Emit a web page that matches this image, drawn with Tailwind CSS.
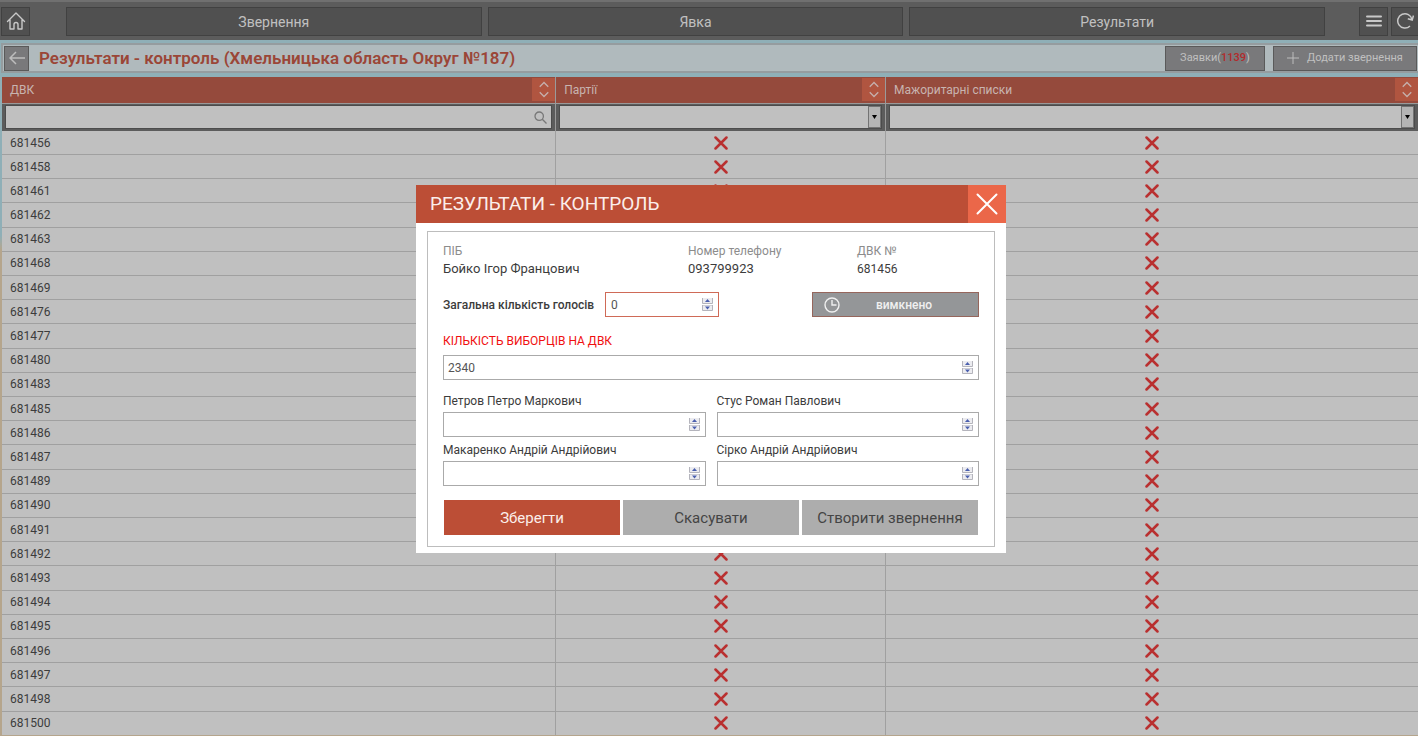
<!DOCTYPE html>
<html lang="uk">
<head>
<meta charset="utf-8">
<title>Результати - контроль</title>
<script src="https://cdn.jsdelivr.net/npm/@tailwindcss/browser@4"></script>
</head>
<body class="font-['Roboto','Liberation_Sans',sans-serif] text-xs leading-4 text-[#3c3c3c]">
<svg class="hidden" aria-hidden="true">
  <symbol id="sort" viewBox="0 0 12 18"><path d="M1.500 6 6 1.500 10.500 6M1.500 12 6 16.500 10.500 12" fill="none" stroke="#c5b0ac" stroke-width="1.400"/></symbol>
  <symbol id="cross" viewBox="0 0 14 14"><path d="M1.500 1.500l11 11M12.500 1.500l-11 11" fill="none" stroke="#b93030" stroke-width="2.500" stroke-linecap="round"/></symbol>
  <symbol id="up" viewBox="0 0 11 6"><path d="M.5 0v5.500h10V0" fill="#ececf0" stroke="#b4b4bc"/><path d="M5.500 1 8 4H3z" fill="#4a5fae"/></symbol>
  <symbol id="down" viewBox="0 0 11 6"><path d="M.5 0v5.500h10V0z" fill="#ececf0" stroke="#b4b4bc"/><path d="M5.500 4.500 8 1.500H3z" fill="#4a5fae"/></symbol>
</svg>

<div class="flex min-h-screen flex-col bg-linear-to-b from-[#8fafb7] from-32% to-[#b5a58c] to-34%">
  <header class="flex h-10 items-center border-t-2 border-[#707070] bg-[#5c5c5c] pl-px text-sm text-[#c0c0c0]">
    <button aria-label="Головна" class="flex size-[29px] items-center justify-center border border-[#414141] bg-[#505050]">
      <svg class="size-5" viewBox="0 0 20 20" fill="none" stroke="#c8c8c8" stroke-width="1.400" stroke-linejoin="round" stroke-linecap="round"><path d="M1.500 10.500 10 2l8.500 8.500M4 9v9h4v-4.500a2 2 0 0 1 4 0V18h4V9"/></svg>
    </button>
    <nav class="mr-[34px] ml-9 flex flex-1 gap-[6px]">
      <button class="h-[29px] flex-1 border border-[#414141] bg-[#505050] pt-[2px]">Звернення</button>
      <button class="h-[29px] flex-1 border border-[#414141] bg-[#505050] pt-[2px]">Явка</button>
      <button class="h-[29px] flex-1 border border-[#414141] bg-[#505050] pt-[2px]">Результати</button>
    </nav>
    <button aria-label="Меню" class="mr-[3px] flex size-[29px] items-center justify-center border border-[#414141] bg-[#505050]">
      <svg class="size-4" viewBox="0 0 16 16" stroke="#c8c8c8" stroke-width="2" stroke-linecap="round"><path d="M1 3.500h14M1 8h14M1 12.500h14"/></svg>
    </button>
    <button aria-label="Оновити" class="flex h-[29px] w-[27px] items-center justify-center border border-r-0 border-[#414141] bg-[#505050]">
      <svg class="size-[18px]" viewBox="0 0 18 18" fill="none" stroke="#c8c8c8" stroke-width="1.500"><path d="M14 14A7.200 7.200 0 1 1 16 7.500M17.500 3.500 16.200 8 11.800 6.800"/></svg>
    </button>
  </header>

  <section class="mt-[3px] mb-1 ml-px flex h-[30px] items-center border-2 border-r-0 border-[#959c9f] bg-[#b0babd] pr-px pl-px">
    <button aria-label="Назад" class="flex size-[25px] items-center justify-center border border-[#5a5a5a] bg-[#79797b]">
      <svg class="h-[14px] w-4" viewBox="0 0 16 14" fill="none" stroke="#bdbdbd" stroke-width="1.500"><path d="M7 1 1 7l6 6M1 7h15"/></svg>
    </button>
    <h1 class="ml-[10px] flex-1 text-[17px] leading-6 font-semibold text-[#9b4637]">Результати - контроль (Хмельницька область Округ №187)</h1>
    <button class="h-[25px] w-[100px] border border-[#5a5a5a] bg-[#79797b] text-[11px] text-[#c0c0c0]">Заявки(<span class="font-medium text-[#b32a2c]">1139</span>)</button>
    <button class="ml-2 flex h-[25px] w-[144px] items-center justify-center gap-2 border border-[#5a5a5a] bg-[#79797b] text-[11px] text-[#c0c0c0]">
      <svg class="size-3" viewBox="0 0 12 12" stroke="#bdbdbd"><path d="M6 0v12M0 6h12"/></svg>Додати звернення
    </button>
  </section>

  <main class="grid flex-1 pb-px pl-[2px]">
    <table class="w-full table-fixed border-collapse bg-[#c0c0c0]">
      <colgroup><col class="w-[39.1%]"><col class="w-[23.3%]"><col></colgroup>
      <thead>
        <tr class="h-[26px] bg-[#954a3c] text-left text-xs text-[#c8b4b0]">
          <th class="h-[26px] border-r border-b border-[#9a9a9a] p-0 font-normal"><div class="flex h-[25px] items-center justify-between pl-2">ДВК<button aria-label="Сортувати за ДВК" class="flex h-[23px] w-[23px] items-center justify-center bg-[#b05540]"><svg class="h-[17px] w-3"><use href="#sort"/></svg></button></div></th>
          <th class="h-[26px] border-r border-b border-[#9a9a9a] p-0 font-normal"><div class="flex h-[25px] items-center justify-between pl-2">Партії<button aria-label="Сортувати за партіями" class="flex h-[23px] w-[23px] items-center justify-center bg-[#b05540]"><svg class="h-[17px] w-3"><use href="#sort"/></svg></button></div></th>
          <th class="h-[26px] border-b border-[#9a9a9a] p-0 font-normal"><div class="flex h-[25px] items-center justify-between pl-2">Мажоритарні списки<button aria-label="Сортувати за списками" class="flex h-[23px] w-[23px] items-center justify-center bg-[#b05540]"><svg class="h-[17px] w-3"><use href="#sort"/></svg></button></div></th>
        </tr>
        <tr class="h-7 bg-[#5c5c5c]">
          <td class="h-7 border-r border-[#9a9a9a] px-[3px] py-0">
            <label class="flex h-6 items-center border border-[#4c4c4c] bg-[#c0c0c0] pr-1">
              <input type="search" aria-label="Пошук ДВК" class="min-w-0 flex-1 bg-transparent px-1 outline-none">
              <svg class="size-[13px]" viewBox="0 0 13 13" fill="none" stroke="#777" stroke-width="1.300"><circle cx="5.200" cy="5.200" r="4.200"/><path d="m8.300 8.300 4.200 4.200"/></svg>
            </label>
          </td>
          <td class="h-7 border-r border-[#9a9a9a] px-[3px] py-0">
            <div class="flex h-6 items-center border border-[#4c4c4c] bg-[#c0c0c0]">
              <select aria-label="Фільтр партій" class="h-full min-w-0 flex-1 appearance-none px-1 outline-none"><option></option></select>
              <span class="flex h-[22px] w-[13px] items-center justify-center border border-[#737373] bg-[#b4b4b4]"><svg class="h-1 w-[5px]" viewBox="0 0 5 4"><path d="M0 0h5L2.500 4z"/></svg></span>
            </div>
          </td>
          <td class="h-7 px-[3px] py-0">
            <div class="flex h-6 items-center border border-[#4c4c4c] bg-[#c0c0c0]">
              <select aria-label="Фільтр мажоритарних списків" class="h-full min-w-0 flex-1 appearance-none px-1 outline-none"><option></option></select>
              <span class="flex h-[22px] w-[13px] items-center justify-center border border-[#737373] bg-[#b4b4b4]"><svg class="h-1 w-[5px]" viewBox="0 0 5 4"><path d="M0 0h5L2.500 4z"/></svg></span>
            </div>
          </td>
        </tr>
      </thead>
      <tbody id="rows"></tbody>
    </table>
  </main>
</div>

<div class="fixed inset-0 flex items-center justify-center pt-[2px] pl-1">
  <div role="dialog" aria-labelledby="dlg" class="w-[590px] max-w-full bg-white">
    <div class="flex h-[38px] items-center bg-[#bc4e36]">
      <h2 id="dlg" class="flex-1 pl-[14px] text-[19px] leading-6 text-[#fbeeeb]">РЕЗУЛЬТАТИ - КОНТРОЛЬ</h2>
      <button aria-label="Закрити" class="flex size-[38px] items-center justify-center bg-[#eb6749]"><svg class="size-[22px]" viewBox="0 0 22 22" stroke="#fff" stroke-width="2" stroke-linecap="round"><path d="m1.500 1.500 19 19M20.500 1.500l-19 19"/></svg></button>
    </div>
    <div class="px-[11px] pt-2 pb-[6px]">
      <form class="border border-[#bdbdbd] px-[15px] pt-[10px] pb-[11px]" onsubmit="return false">
        <dl class="grid grid-cols-[245px_169px_1fr] leading-[18px]">
          <div><dt class="text-[#8c8c8c]">ПІБ</dt><dd class="text-[13px]">Бойко Ігор Францович</dd></div>
          <div><dt class="text-[#8c8c8c]">Номер телефону</dt><dd class="text-[13px]">093799923</dd></div>
          <div><dt class="text-[#8c8c8c]">ДВК №</dt><dd>681456</dd></div>
        </dl>
        <div class="mt-[14px] flex items-center">
          <label for="total" class="w-[162px] font-medium whitespace-nowrap">Загальна кількість голосів</label>
          <div class="flex h-[25px] w-[114px] items-center border border-[#cf6a57] pr-[5px]">
            <input id="total" type="number" value="0" class="min-w-0 flex-1 [appearance:textfield] px-[5px] text-[#555] outline-none">
            <span class="flex flex-col gap-px"><button type="button" aria-label="Більше" class="block"><svg class="h-[6px] w-[11px]"><use href="#up"/></svg></button><button type="button" aria-label="Менше" class="block"><svg class="h-[6px] w-[11px]"><use href="#down"/></svg></button></span>
          </div>
          <button type="button" class="ml-auto flex h-[25px] w-[167px] items-center border border-[#96665c] bg-[#949698] pl-[11px] font-medium text-[#f0f0f0]">
            <svg class="size-4" viewBox="0 0 16 16" fill="none" stroke="#f0f0f0" stroke-width="1.400"><circle cx="8" cy="8" r="7"/><path d="M8 3v5h4.500"/></svg>
            <span class="flex-1 pr-[18px] pl-2">вимкнено</span>
          </button>
        </div>
        <label for="voters" class="mt-4 block text-[#f01010]">КІЛЬКІСТЬ ВИБОРЦІВ НА ДВК</label>
        <div class="mt-[6px] flex h-[25px] items-center border border-[#aaa] pr-[5px]">
          <input id="voters" type="number" value="2340" class="min-w-0 flex-1 [appearance:textfield] px-1 text-[#555] outline-none">
          <span class="flex flex-col gap-px"><button type="button" aria-label="Більше" class="block"><svg class="h-[6px] w-[11px]"><use href="#up"/></svg></button><button type="button" aria-label="Менше" class="block"><svg class="h-[6px] w-[11px]"><use href="#down"/></svg></button></span>
        </div>
        <div id="candidates" class="mt-3 grid grid-cols-2 gap-x-[11px] gap-y-1"></div>
        <div class="mt-[14px] grid grid-cols-3 gap-[3px] px-px text-[15px]">
          <button type="submit" class="h-[35px] bg-[#bc4e36] text-[#fbeeeb]">Зберегти</button>
          <button type="button" class="h-[35px] bg-[#adadad] text-[#444]">Скасувати</button>
          <button type="button" class="h-[35px] bg-[#adadad] text-[#444]">Створити звернення</button>
        </div>
      </form>
    </div>
  </div>
</div>

<script>
const ids = [681456,681458,681461,681462,681463,681468,681469,681476,681477,681480,681483,681485,681486,681487,681489,681490,681491,681492,681493,681494,681495,681496,681497,681498,681500];
const cross = '<svg class="mx-auto size-[14px]" role="img" aria-label="Ні"><use href="#cross"/></svg>';
document.getElementById('rows').innerHTML = ids.map(id => `
  <tr class="border-b border-[#a0a0a0] last:border-b-0">
    <td class="border-r border-[#a0a0a0] py-0 pl-2">${id}</td>
    <td class="border-r border-[#a0a0a0] p-0">${cross}</td>
    <td class="p-0">${cross}</td>
  </tr>`).join('');

const people = ['Петров Петро Маркович', 'Стус Роман Павлович', 'Макаренко Андрій Андрійович', 'Сірко Андрій Андрійович'];
document.getElementById('candidates').innerHTML = people.map((name, i) => `
  <div>
    <label for="c${i}" class="block h-5 leading-[18px]">${name}</label>
    <div class="flex h-[25px] items-center border border-[#aaa] pr-[5px]">
      <input id="c${i}" type="number" class="min-w-0 flex-1 [appearance:textfield] px-1 outline-none">
      <span class="flex flex-col gap-px"><button type="button" aria-label="Більше" class="block"><svg class="h-[6px] w-[11px]"><use href="#up"/></svg></button><button type="button" aria-label="Менше" class="block"><svg class="h-[6px] w-[11px]"><use href="#down"/></svg></button></span>
    </div>
  </div>`).join('');
</script>
</body>
</html>
